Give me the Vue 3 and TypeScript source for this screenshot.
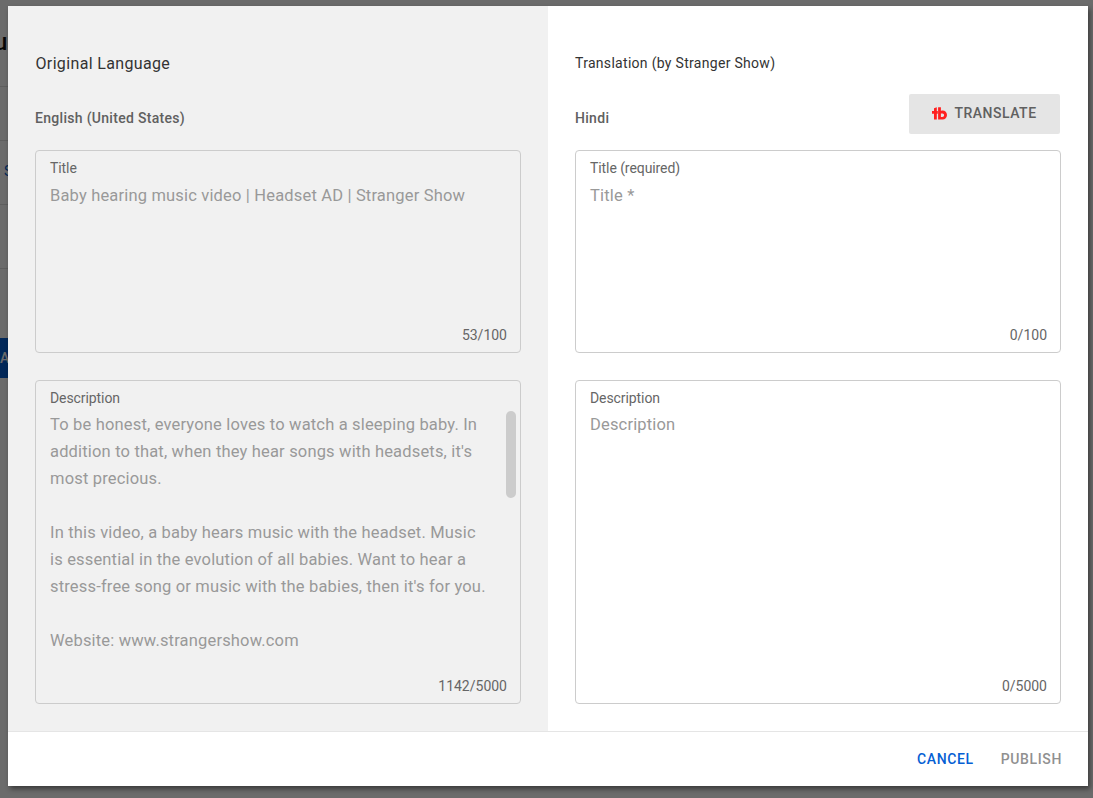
<script setup lang="ts">
const original = [
  'To be honest, everyone loves to watch a sleeping baby. In addition to that, when they hear songs with headsets, it\'s most precious.',
  'In this video, a baby hears music with the headset. Music is essential in the evolution of all babies. Want to hear a stress-free song or music with the babies, then it\'s for you.',
  'Website: www.strangershow.com',
]
</script>

<template>
  <div class="page">
    <div class="behind">
      <span class="behind-head">u</span>
      <i class="line l1"></i>
      <i class="line l2"></i>
      <i class="line l3"></i>
      <i class="line l4"></i>
      <span class="behind-link">S</span>
      <span class="behind-btn">UA</span>
    </div>
    <div class="overlay">
      <div class="dialog">
        <div class="panels">
          <section class="panel left">
            <h2 class="head big">Original Language</h2>
            <div class="lang-row"><span class="lang">English (United States)</span></div>
            <div class="box title-box">
              <label>Title</label>
              <div class="value title-value">Baby hearing music video | Headset AD | Stranger Show</div>
              <div class="count">53/100</div>
            </div>
            <div class="box desc-box">
              <label>Description</label>
              <div class="value scroll">
                <p v-for="p in original" :key="p">{{ p }}</p>
              </div>
              <div class="thumb"></div>
              <div class="count">1142/5000</div>
            </div>
          </section>
          <section class="panel right">
            <h2 class="head">Translation (by Stranger Show)</h2>
            <div class="lang-row">
              <span class="lang">Hindi</span>
              <button class="translate" type="button">
                <svg width="15" height="13" viewBox="0 0 15 13">
                  <path d="M0 4H2V1.2L4.8 0.2V4H5.8V6.8H4.8V12.6H2V6.8H0Z" fill="#ff2020"/>
                  <path fill-rule="evenodd" d="M6.1 0.2H8.9V4C9.4 3.7 10 3.6 10.6 3.6C13.1 3.6 15 5.6 15 8.1C15 10.7 13.1 12.6 10.6 12.6H6.1ZM8.9 6.5V9.9H10.3C11.4 9.9 12.1 9.2 12.1 8.2C12.1 7.2 11.4 6.4 10.3 6.4Z" fill="#ff2020"/>
                </svg>
                TRANSLATE
              </button>
            </div>
            <div class="box title-box">
              <label>Title (required)</label>
              <div class="value title-value">Title *</div>
              <div class="count">0/100</div>
            </div>
            <div class="box desc-box">
              <label>Description</label>
              <div class="value desc-value">Description</div>
              <div class="count">0/5000</div>
            </div>
          </section>
        </div>
        <footer class="foot">
          <button class="action cancel" type="button">CANCEL</button>
          <button class="action publish" type="button">PUBLISH</button>
        </footer>
      </div>
    </div>
  </div>
</template>

<style>
html, body { margin: 0; background: #fff; overflow: hidden; }
</style>

<style scoped>
.page {
  width: 1093px;
  height: 798px;
  position: relative;
  overflow: hidden;
  font-family: Roboto, "Liberation Sans", sans-serif;
  background: #fff;
}
.behind { position: absolute; inset: 0; }
.behind-head { position: absolute; left: -6px; top: 28px; font-size: 24px; font-weight: 500; color: #111; }
.line { position: absolute; left: 0; width: 20px; height: 1px; background: #e0e0e0; }
.l1 { top: 86px; }
.l2 { top: 140px; }
.l3 { top: 204px; }
.l4 { top: 268px; }
.behind-link { position: absolute; left: 4px; top: 163px; font-size: 14px; color: #065fd4; }
.behind-btn { position: absolute; left: 0; top: 338px; width: 12px; height: 40px; background: #065fd4; color: #fff; font-size: 14px; line-height: 40px; font-weight: 500; text-indent: -9px; white-space: nowrap; overflow: hidden; }
.overlay {
  position: absolute;
  inset: 0;
  background: rgba(0, 0, 0, 0.58);
  padding: 6px 5px 12px 8px;
  box-sizing: border-box;
}
.dialog {
  width: 1080px;
  height: 780px;
  background: #fff;
  display: flex;
  flex-direction: column;
  box-shadow: 2px 3px 5px rgba(0, 0, 0, 0.45);
}
.panels { display: flex; height: 725px; }
.panel { width: 540px; box-sizing: border-box; padding: 0 27px; display: flex; flex-direction: column; }
.left { background: #f1f1f1; }
.head { margin: 0; height: 88px; padding-top: 47px; box-sizing: border-box; font-size: 14px; line-height: 20px; font-weight: 400; color: #333; letter-spacing: 0.3px; }
.big { font-size: 16px; letter-spacing: 0.35px; padding-top: 47px; padding-left: 0.5px; line-height: 21px; }
.lang-row { height: 56px; display: flex; align-items: flex-start; justify-content: space-between; }
.lang { font-size: 14px; font-weight: 500; color: #606060; line-height: 20px; margin-top: 14px; letter-spacing: 0.3px; }
.translate {
  width: 151px;
  height: 40px;
  border: 0;
  border-radius: 2px;
  background: #e5e5e5;
  color: #606060;
  font: 500 14px/20px Roboto, "Liberation Sans", sans-serif;
  letter-spacing: 0.5px;
  display: flex;
  align-items: center;
  justify-content: center;
  gap: 7px;
  padding: 0 0 2px;
  margin-right: 1px;
}
.box {
  position: relative;
  width: 486px;
  box-sizing: border-box;
  border: 1px solid #ccc;
  border-radius: 4px;
  padding: 8px 14px 0;
  color: #999;
}
.title-box { height: 203px; margin-bottom: 27px; }
.desc-box { height: 324px; }
.box label { display: block; font-size: 14px; line-height: 18px; color: #666; letter-spacing: -0.08px; }
.value { font-size: 16.5px; line-height: 27px; letter-spacing: 0.17px; }
.title-value { margin-top: 5px; }
.desc-value { margin-top: 4px; }
.scroll { height: 270px; width: 436px; overflow: hidden; margin-top: 4px; }
.scroll p { margin: 0 0 27px; }
.thumb { position: absolute; left: 470px; top: 30px; width: 10px; height: 87px; border-radius: 5px; background: #ccc; }
.count { position: absolute; right: 13px; bottom: 8px; font-size: 14px; line-height: 18px; color: #666; }
.foot {
  height: 55px;
  border-top: 1px solid #e5e5e5;
  box-sizing: border-box;
  display: flex;
  align-items: center;
  justify-content: flex-end;
  gap: 27px;
  padding: 0 26px 0 0;
}
.action { border: 0; background: none; padding: 0; font: 500 14px/20px Roboto, "Liberation Sans", sans-serif; letter-spacing: 0.62px; }
.cancel { color: #065fd4; }
.publish { color: #909090; }
</style>
